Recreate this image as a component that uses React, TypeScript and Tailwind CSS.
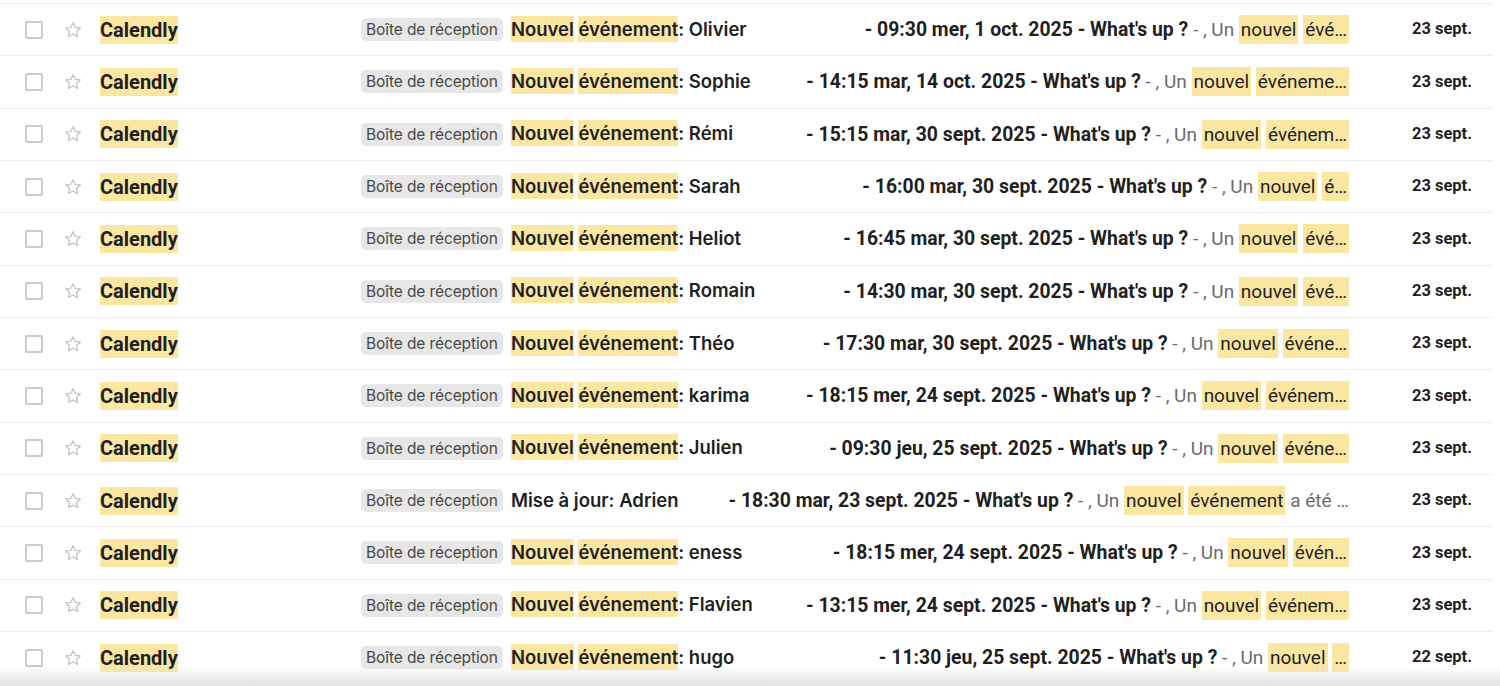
import type { ReactNode } from 'react'

type Row = {
  name: string
  subject?: string
  time: string
  tail: string[]
  after?: string
  date: string
}

const ROWS: Row[] = [
  { name: 'Olivier', time: '- 09:30 mer, 1 oct. 2025', tail: ['nouvel', 'évé…'], date: '23 sept.' },
  { name: 'Sophie', time: '- 14:15 mar, 14 oct. 2025', tail: ['nouvel', 'événeme…'], date: '23 sept.' },
  { name: 'Rémi', time: '- 15:15 mar, 30 sept. 2025', tail: ['nouvel', 'événem…'], date: '23 sept.' },
  { name: 'Sarah', time: '- 16:00 mar, 30 sept. 2025', tail: ['nouvel', 'é…'], date: '23 sept.' },
  { name: 'Heliot', time: '- 16:45 mar, 30 sept. 2025', tail: ['nouvel', 'évé…'], date: '23 sept.' },
  { name: 'Romain', time: '- 14:30 mar, 30 sept. 2025', tail: ['nouvel', 'évé…'], date: '23 sept.' },
  { name: 'Théo', time: '- 17:30 mar, 30 sept. 2025', tail: ['nouvel', 'événe…'], date: '23 sept.' },
  { name: 'karima', time: '- 18:15 mer, 24 sept. 2025', tail: ['nouvel', 'événem…'], date: '23 sept.' },
  { name: 'Julien', time: '- 09:30 jeu, 25 sept. 2025', tail: ['nouvel', 'événe…'], date: '23 sept.' },
  { name: 'Adrien', subject: 'Mise à jour', time: '- 18:30 mar, 23 sept. 2025', tail: ['nouvel', 'événement'], after: ' a été …', date: '23 sept.' },
  { name: 'eness', time: '- 18:15 mer, 24 sept. 2025', tail: ['nouvel', 'évén…'], date: '23 sept.' },
  { name: 'Flavien', time: '- 13:15 mer, 24 sept. 2025', tail: ['nouvel', 'événem…'], date: '23 sept.' },
  { name: 'hugo', time: '- 11:30 jeu, 25 sept. 2025', tail: ['nouvel', '…'], date: '22 sept.' },
]

function Mark({ children, pad }: { children: ReactNode; pad?: boolean }) {
  return <span className={pad ? 'bg-[#fbe6a2] py-[3px] px-[2px]' : 'bg-[#fbe6a2] py-[2px]'}>{children}</span>
}

function Star() {
  return (
    <svg className="w-[20px] h-[20px] text-[#c4c4c4]" viewBox="0 0 24 24" fill="none" stroke="currentColor" strokeWidth={1.6} strokeLinejoin="round">
      <path d="M12 3.2l2.6 5.6 6.1.7-4.5 4.2 1.2 6.1L12 16.8l-5.4 3 1.2-6.1-4.5-4.2 6.1-.7z" />
    </svg>
  )
}

function MailRow({ row }: { row: Row }) {
  return (
    <div className="h-[52.33px] flex items-center border-b border-[#eeeeee] text-[#1f1f1f]">
      <div className="w-[25px]" />
      <div className="w-[18px] h-[18px] border-2 border-[#cacaca] rounded-[2px]" />
      <div className="w-[20px]" />
      <Star />
      <div className="w-[17px]" />
      <div className="w-[261px] text-[20px] font-bold font-['Roboto',sans-serif]">
        <Mark>Calendly</Mark>
      </div>
      <div className="bg-[#e7e7e7] rounded-[5px] px-[5px] h-[23px] flex items-center text-[15.5px] text-[#474747] tracking-[-0.1px]">
        Boîte de réception
      </div>
      <div className="w-[8px]" />
      <div className="text-[18.5px] font-semibold whitespace-nowrap">
        {row.subject ? row.subject : (<><Mark>Nouvel</Mark> <Mark>événement</Mark></>)}: {row.name}
      </div>
      <div className="flex-1 min-w-0 text-right whitespace-nowrap text-[19px] font-['Roboto',sans-serif]">
        <span className="font-bold text-[19.4px]">{row.time} - What's up ?</span>
        <span className="text-[#6b6b6b]"> - , Un </span>
        <Mark pad>{row.tail[0]}</Mark> <Mark pad>{row.tail[1]}</Mark>
        {row.after && <span className="text-[#6b6b6b]">{row.after}</span>}
      </div>
      <div className="w-[123px] text-right text-[16.5px] font-bold font-['Roboto',sans-serif]">{row.date}</div>
      <div className="w-[21px]" />
    </div>
  )
}

export default function App() {
  return (
    <div className="relative w-[1500px] h-[686px] overflow-hidden bg-white font-['Inter',sans-serif]">
      <div className="w-[1493px] pt-[3px]">
        <div className="border-t border-[#eeeeee]">
          {ROWS.map((r, i) => <MailRow key={i} row={r} />)}
        </div>
      </div>
      <div className="absolute left-0 right-0 bottom-0 h-[20px] bg-gradient-to-b from-transparent to-[#e2e2e2]" />
    </div>
  )
}
